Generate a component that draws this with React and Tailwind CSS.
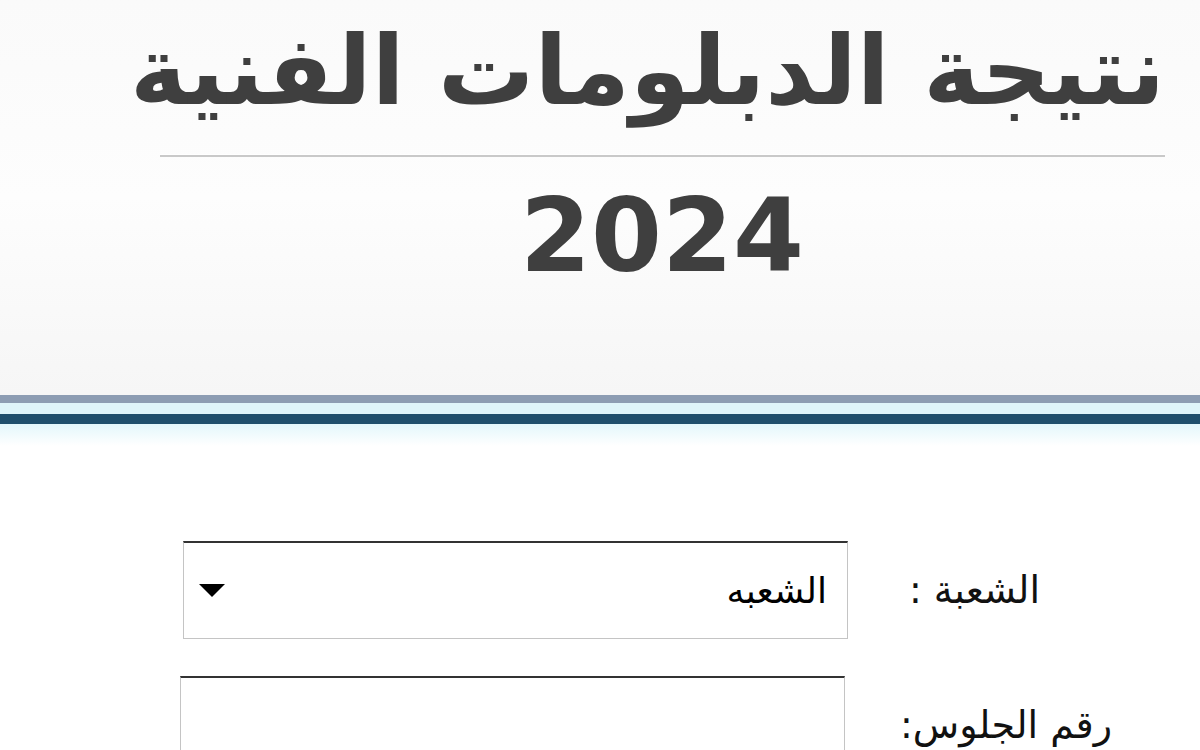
export default function App() {
  return (
    <div className="w-[1200px] h-[750px] overflow-hidden bg-white" style={{ fontFamily: '"DejaVu Sans", sans-serif' }}>
      {/* Header */}
      <div className="h-[395px] bg-gradient-to-b from-[#fafafa] via-[#fdfdfd] to-[#f6f6f6] flex flex-col">
        <div dir="rtl" className="pr-[35px] pt-[4px] h-[154px] flex items-start">
          <h1 className="text-[96px] leading-[134px] font-bold text-[#3f3f3f] whitespace-nowrap">
            نتيجة الدبلومات الفنية
          </h1>
        </div>
        <div className="ml-[160px] mr-[35px] h-[3px] bg-[#c9c9c9] border-t border-white" />
        <div className="flex justify-center pl-[124px] pt-[21px]">
          <span className="text-[102px] leading-[116px] font-bold text-[#3f3f3f]">2024</span>
        </div>
      </div>

      {/* Divider */}
      <div className="h-[8px] bg-[#8d9db3]" />
      <div className="h-[11px] bg-[#dff5fa]" />
      <div className="h-[10px] bg-[#1f4f6c]" />
      <div className="h-[22px] bg-gradient-to-b from-[#e3f7fb] to-white" />

      {/* Form */}
      <div dir="rtl" className="pt-[95px] flex flex-col gap-[37px]">
        <div className="flex items-center">
          <label className="w-[352px] pr-[160px] text-[38px] text-[#111] whitespace-nowrap">الشعبة :</label>
          <div className="w-[665px] h-[98px] border border-[#c4c4c4] border-t-2 border-t-[#333] flex items-center justify-between pr-[20px] pl-[15px] bg-white">
            <span className="text-[36px] text-black">الشعبه</span>
            <svg width="26" height="13" viewBox="0 0 26 13"><polygon points="0,0 26,0 13,13" fill="#000" /></svg>
          </div>
        </div>
        <div className="flex items-center">
          <label className="w-[355px] pr-[88px] text-[38px] text-[#111] whitespace-nowrap">رقم الجلوس:</label>
          <div className="w-[665px] h-[98px] border border-[#c4c4c4] border-t-2 border-t-[#333] bg-white" />
        </div>
      </div>
    </div>
  );
}
